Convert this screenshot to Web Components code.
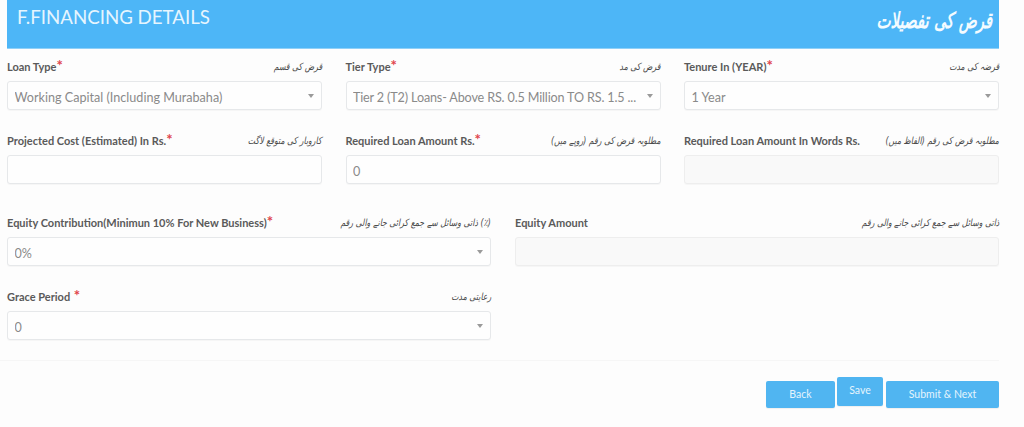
<!DOCTYPE html>
<html lang="en"><head><meta charset="utf-8"><title>Financing Details</title>
<style>
html,body{margin:0;height:427px;overflow:hidden;background:#fdfdfd}
body{font-family:Lato,"DejaVu Sans",sans-serif}
</style></head><body>
<template id="t-page"><style>
:host{display:block;padding:0 25px 0 7px;box-sizing:border-box;width:1024px;height:427px}
</style><slot></slot></template>

<template id="t-head"><style>
:host{display:flex;justify-content:space-between;height:49px;background:#4db6f7;color:#e6f5fe;box-sizing:border-box;padding:0 7px 0 10px;border-bottom:1px solid #8fd0f8}
.en{font:400 18.7px/34px Lato,sans-serif}
.ur{display:inline-block;font:italic 700 22px/42px "DejaVu Sans",sans-serif;color:#f4fbff;transform:scaleX(.68);transform-origin:right center;white-space:nowrap}
</style><span class="en"><slot name="en"></slot></span><span class="ur" dir="rtl"><slot name="ur"></slot></span></template>

<template id="t-grid"><style>
:host{display:grid;margin-top:var(--mt,0);grid-template-columns:var(--cols);column-gap:var(--gap,24px)}
</style><slot></slot></template>

<template id="t-field"><style>
:host{display:block;min-width:0}
.lab{display:flex;justify-content:space-between;align-items:center;height:19px;margin-bottom:5px}
.en{flex:none;font:700 11px/19px Lato,sans-serif;color:#5a5a5a;white-space:nowrap}
.req{color:#e0444b;font-size:15px;line-height:10px}
.ur{flex:0 1 auto;min-width:0;font:italic 400 10px/19px "DejaVu Sans",sans-serif;color:#4a4a4a;white-space:nowrap;transform:scaleX(.78);transform-origin:right center}
.box{display:flex;align-items:center;height:29px;box-sizing:border-box;border:1px solid #e6e8ea;border-radius:3px;background:#fefefe;padding:4px 7px 0 6.5px;font:400 12.6px/23px Lato,sans-serif;color:#8a8a8a;box-shadow:0 1px 1px rgba(0,0,0,.03)}
:host([disabled]) .box{background:#f9f9f9;border-color:#eeeeee}
.txt{flex:1;overflow:hidden;white-space:nowrap;text-overflow:ellipsis;min-width:0}
.arr{display:none;flex:none;width:0;height:0;margin:-4px 0 0 7px;border:3px solid transparent;border-top:4px solid #9a9a9a;border-bottom:0}
:host([select]) .arr{display:block}
</style>
<div class="lab"><span class="en"><slot name="label"></slot><span class="req"></span></span><span class="ur" dir="rtl"><slot name="ur"></slot></span></div>
<div class="box"><span class="txt"><slot></slot></span><i class="arr"></i></div></template>

<template id="t-foot"><style>
:host{display:flex;justify-content:flex-end;align-items:flex-start;border-top:1px solid #f6f6f6;margin:20px 0 0 -7px;padding-top:16px;gap:2px}
</style><slot></slot></template>

<template id="t-btn"><style>
:host{display:block;box-sizing:border-box;height:27px;margin-top:4px;background:#50b5f1;color:#e4f4fd;border-radius:2px;font:400 10.5px/27px Lato,sans-serif;text-align:center;box-shadow:0 1px 1px rgba(0,0,0,.06)}
:host([raised]){margin-top:0;height:29px;line-height:27px}
</style><slot></slot></template>

<script>
const def=(n,id,fn)=>customElements.define(n,class extends HTMLElement{constructor(){super();this.attachShadow({mode:'open'}).append(document.getElementById(id).content.cloneNode(true));}connectedCallback(){fn&&fn(this)}});
def('fin-page','t-page');def('fin-head','t-head');def('fin-grid','t-grid');def('fin-foot','t-foot');def('fin-btn','t-btn');
def('fin-field','t-field',e=>{if(e.hasAttribute('req'))e.shadowRoot.querySelector('.req').textContent=e.getAttribute('req')||'*'});
</script>

<fin-page>
<fin-head><span slot="en">F.FINANCING DETAILS</span><span slot="ur">قرض کی تفصیلات</span></fin-head>

<fin-grid style="--cols:repeat(3,1fr);--gap:23.5px;--mt:8px">
<fin-field select req="*"><span slot="label">Loan Type</span><span slot="ur">قرض کی قسم</span>Working Capital (Including Murabaha)</fin-field>
<fin-field select req="*"><span slot="label">Tier Type</span><span slot="ur">قرض کی مد</span><span style="letter-spacing:-.15px">Tier 2 (T2) Loans- Above RS. 0.5 Million TO RS. 1.5 ...</span></fin-field>
<fin-field select req="*"><span slot="label">Tenure In (YEAR)</span><span slot="ur">قرضہ کی مدت</span>1 Year</fin-field>
</fin-grid>

<fin-grid style="--cols:repeat(3,1fr);--gap:23.5px;--mt:21px">
<fin-field req="*"><span slot="label">Projected Cost (Estimated) In Rs.</span><span slot="ur">کاروبار کی متوقع لاگت</span></fin-field>
<fin-field req="*"><span slot="label">Required Loan Amount Rs.</span><span slot="ur">مطلوبہ قرض کی رقم (روپے میں)</span>0</fin-field>
<fin-field disabled><span slot="label">Required Loan Amount In Words Rs.</span><span slot="ur">مطلوبہ قرض کی رقم (الفاظ میں)</span></fin-field>
</fin-grid>

<fin-grid style="--cols:repeat(2,1fr);--gap:24px;--mt:29px">
<fin-field select req="*"><span slot="label">Equity Contribution(Minimun 10% For New Business)</span><span slot="ur">(٪) ذاتی وسائل سے جمع کرائی جانے والی رقم</span>0%</fin-field>
<fin-field disabled><span slot="label">Equity Amount</span><span slot="ur">ذاتی وسائل سے جمع کرائی جانے والی رقم</span></fin-field>
</fin-grid>

<fin-grid style="--cols:484px;--mt:21px">
<fin-field select req=" *"><span slot="label">Grace Period</span><span slot="ur">رعایتی مدت</span>0</fin-field>
</fin-grid>

<fin-foot>
<fin-btn style="width:69px">Back</fin-btn>
<fin-btn raised style="width:46px">Save</fin-btn>
<fin-btn style="width:113px;margin-left:1px">Submit &amp; Next</fin-btn>
</fin-foot>
</fin-page>
</body></html>
